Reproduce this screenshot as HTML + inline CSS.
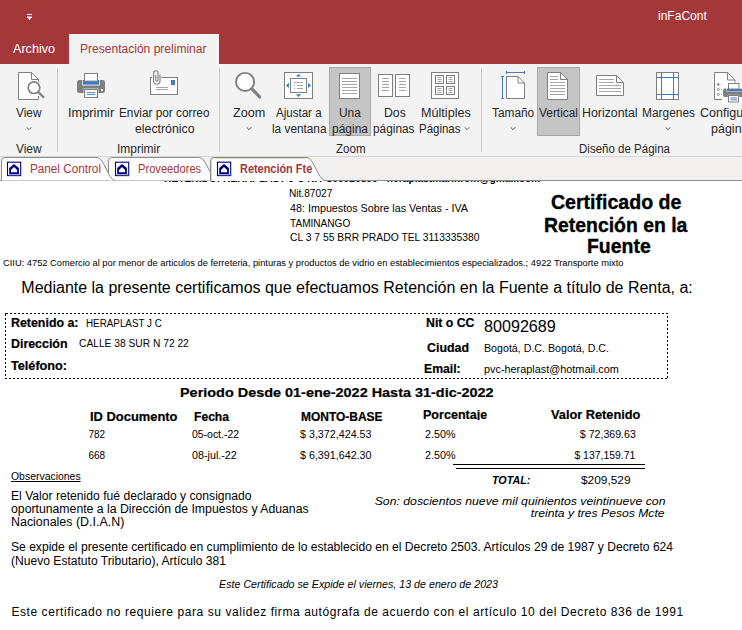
<!DOCTYPE html><html><head><meta charset="utf-8"><style>html,body{margin:0;padding:0;width:742px;height:630px;overflow:hidden;background:#fff;position:relative}.t{position:absolute;white-space:nowrap;line-height:normal;font-family:"Liberation Sans",sans-serif}</style></head><body><div style="position:absolute;left:0;top:0;width:742px;height:64px;background:#A4373A"></div>
<!-- QAT icon -->
<div style="position:absolute;left:27px;top:14px;width:5px;height:1px;background:#fff"></div>
<svg style="position:absolute;left:26px;top:16px" width="7" height="5"><path d="M1 1H6L3.5 4Z" fill="#fff"/><rect x="1" y="0.5" width="5" height="1" fill="#fff"/></svg>
<!-- active ribbon tab -->
<div style="position:absolute;left:69px;top:34px;width:150px;height:30px;background:#F3F3F3"></div>
<!-- ribbon body -->
<div style="position:absolute;left:0;top:64px;width:742px;height:92px;background:#F3F3F3"></div>
<div style="position:absolute;left:0;top:156px;width:742px;height:1px;background:#D6D6D6"></div>
<!-- separators -->
<div style="position:absolute;left:57px;top:68px;width:1px;height:84px;background:#C8C8C8"></div>
<div style="position:absolute;left:219px;top:68px;width:1px;height:84px;background:#C8C8C8"></div>
<div style="position:absolute;left:481px;top:68px;width:1px;height:84px;background:#C8C8C8"></div>
<!-- selected buttons -->
<div style="position:absolute;left:329px;top:67px;width:40px;height:67px;background:#C5C5C5;border:1px solid #A8A8A8"></div>
<div style="position:absolute;left:537px;top:67px;width:41px;height:67px;background:#C5C5C5;border:1px solid #A8A8A8"></div>
<!-- chevrons -->
<svg style="position:absolute;left:0;top:0" width="742" height="160">
  <g fill="none" stroke="#555" stroke-width="1">
    <path d="M26.7 127.3 L29 129.6 L31.3 127.3"/>
    <path d="M246.7 127.3 L249 129.6 L251.3 127.3"/>
    <path d="M464.7 127.3 L467 129.6 L469.3 127.3"/>
    <path d="M510.7 127.3 L513 129.6 L515.3 127.3"/>
    <path d="M665.7 127.3 L668 129.6 L670.3 127.3"/>
  </g>
  <!-- View icon: page with magnifier -->
  <path d="M18.5 72.5 H31.5 L38.5 79.5 V99.5 H18.5 Z" fill="#fff" stroke="#7F7F7F"/>
  <path d="M31.5 72.5 V79.5 H38.5" fill="none" stroke="#7F7F7F"/>
  <path d="M38.3 92 L44 97.7" stroke="#F3F3F3" stroke-width="4.5"/>
  <circle cx="34" cy="87.7" r="7.4" fill="#fff"/>
  <rect x="37" y="93" width="3" height="3" fill="#F3F3F3"/>
  <circle cx="34" cy="87.7" r="5.8" fill="#fff" stroke="#7F7F7F" stroke-width="1.7"/>
  <path d="M38.3 92 L44 97.7" stroke="#7F7F7F" stroke-width="2.3"/>
  <!-- printer -->
  <rect x="77" y="80" width="28" height="13" rx="2.2" fill="#7F7F7F"/>
  <rect x="82.3" y="79.3" width="17.4" height="6.2" fill="#fff"/>
  <rect x="83" y="80" width="16" height="4.7" fill="#3E7BC0"/>
  <rect x="84.5" y="73.5" width="13" height="7.6" fill="#fff" stroke="#7F7F7F"/>
  <rect x="83.6" y="88.6" width="14.8" height="9.8" fill="#fff"/>
  <rect x="84.5" y="89.5" width="13" height="8" fill="#fff" stroke="#7F7F7F"/>
  <path d="M87 92.6 H95 M87 94.5 H95" stroke="#3E7BC0" stroke-width="0.9"/>
  <rect x="101" y="89" width="2" height="2" fill="#fff"/>
  <!-- envelope -->
  <rect x="150.5" y="77.5" width="27" height="17" fill="#fff" stroke="#7F7F7F"/>
  <rect x="171" y="80" width="4" height="5" fill="#3E7BC0"/>
  <path d="M156 87.5 H168 M156 89.5 H168" stroke="#A6A6A6"/>
  <path d="M160 74.5 V81 A3.2 3.2 0 0 1 153.6 81 V73 A2.2 2.2 0 0 1 158 73 V80 A1.1 1.1 0 0 1 155.8 80 V75" fill="none" stroke="#F3F3F3" stroke-width="2.6"/>
  <rect x="152" y="78" width="9.5" height="8" fill="#fff"/>
  <path d="M160 74.5 V81 A3.2 3.2 0 0 1 153.6 81 V73 A2.2 2.2 0 0 1 158 73 V80 A1.1 1.1 0 0 1 155.8 80 V75" fill="none" stroke="#7F7F7F" stroke-width="1.1"/>
  <!-- zoom magnifier -->
  <circle cx="245.1" cy="81.9" r="9.05" fill="#fff" stroke="#7F7F7F" stroke-width="1.9"/>
  <path d="M251.8 88.8 L259.6 96.8" stroke="#7F7F7F" stroke-width="3.2" stroke-linecap="round"/>
  <!-- ajustar -->
  <rect x="284.5" y="72.5" width="28" height="26" fill="#fff" stroke="#7F7F7F"/>
  <rect x="290.5" y="78.5" width="16" height="14" fill="#fff" stroke="#7F7F7F"/>
  <path d="M294 82.5 H303 M297 85.5 H303 M297 88.5 H303" stroke="#A6A6A6"/>
  <rect x="294" y="85" width="1" height="1" fill="#A6A6A6"/><rect x="294" y="88" width="1" height="1" fill="#A6A6A6"/>
  <path d="M295.8 76.6 L298.5 73.9 L301.2 76.6 Z M295.8 94.2 L298.5 96.9 L301.2 94.2 Z M288.9 82.8 L286 85.4 L288.9 88 Z M308 82.8 L311 85.4 L308 88 Z" fill="#3E7BC0"/>
  <!-- una pagina -->
  <rect x="339.5" y="73.5" width="20" height="25" fill="#fff" stroke="#7F7F7F"/>
  <path d="M342 78.5 H357 M342 81.5 H357 M342 84.5 H357 M342 87.5 H357 M342 90.5 H357 M342 93.5 H357" stroke="#A6A6A6"/>
  <!-- dos paginas -->
  <rect x="378.5" y="74.5" width="14" height="22" fill="#fff" stroke="#7F7F7F"/>
  <rect x="395.5" y="74.5" width="14" height="22" fill="#fff" stroke="#7F7F7F"/>
  <path d="M382 78.5 H389 M382 81.5 H389 M382 84.5 H389 M382 87.5 H389 M382 90.5 H389 M399 78.5 H406 M399 81.5 H406 M399 84.5 H406 M399 87.5 H406 M399 90.5 H406" stroke="#A6A6A6"/>
  <!-- multiples -->
  <rect x="431.5" y="72.5" width="27" height="26" fill="#fff" stroke="#7F7F7F"/>
  <rect x="435.5" y="75.5" width="8" height="8" fill="#fff" stroke="#7F7F7F"/>
  <rect x="446.5" y="75.5" width="8" height="8" fill="#fff" stroke="#7F7F7F"/>
  <rect x="435.5" y="86.5" width="8" height="8" fill="#fff" stroke="#7F7F7F"/>
  <rect x="446.5" y="86.5" width="8" height="8" fill="#fff" stroke="#7F7F7F"/>
  <path d="M437.5 77.5 H441.5 M437.5 79.5 H441.5 M437.5 81.5 H441.5 M448.5 77.5 H452.5 M448.5 79.5 H452.5 M448.5 81.5 H452.5 M437.5 88.5 H441.5 M437.5 90.5 H441.5 M437.5 92.5 H441.5 M448.5 88.5 H452.5 M448.5 90.5 H452.5 M448.5 92.5 H452.5" stroke="#A6A6A6"/>
  <!-- tamano -->
  <path d="M506.5 76.5 H518 L524.5 83 V98.5 H506.5 Z" fill="#fff" stroke="#7F7F7F"/>
  <path d="M518 76.5 V83 H524.5" fill="none" stroke="#7F7F7F"/>
  <path d="M506 72.5 H525 M506.5 71 V74 M524.5 71 V74 M502.5 76 V99 M501 76.5 H504 M501 98.5 H504" stroke="#3E7BC0"/>
  <!-- vertical -->
  <path d="M547.5 72.5 H560.5 L567.5 79.5 V99.5 H547.5 Z" fill="#fff" stroke="#7F7F7F"/>
  <path d="M560.5 72.5 V79.5 H567.5" fill="none" stroke="#7F7F7F"/>
  <path d="M550 76.5 H558 M550 79.5 H558 M550 82.5 H565 M550 85.5 H565 M550 88.5 H565 M550 91.5 H565 M550 94.5 H565" stroke="#A6A6A6"/>
  <!-- horizontal -->
  <path d="M596.5 75.5 H616.5 L623.5 82.5 V95.5 H596.5 Z" fill="#fff" stroke="#7F7F7F"/>
  <path d="M616.5 75.5 V82.5 H623.5" fill="none" stroke="#7F7F7F"/>
  <path d="M599 79.5 H614 M599 82.5 H614 M599 85.5 H621 M599 88.5 H621 M599 91.5 H621" stroke="#A6A6A6"/>
  <!-- margenes -->
  <rect x="656.5" y="72.5" width="22" height="27" fill="#fff" stroke="#7F7F7F"/>
  <path d="M661.5 73 V99 M673.5 73 V99 M657 77.5 H678 M657 94.5 H678" stroke="#3E7BC0"/>
  <!-- config -->
  <path d="M714.5 72.5 H727.5 L735 80 V99.5 H714.5 Z" fill="#fff" stroke="#7F7F7F"/>
  <path d="M727.5 72.5 V80 H735" fill="none" stroke="#7F7F7F"/>
  <circle cx="718.3" cy="84.4" r="1.2" fill="#7F7F7F"/>
  <circle cx="718.3" cy="89.4" r="1.1" fill="none" stroke="#7F7F7F" stroke-width="0.8"/>
  <circle cx="718.3" cy="94.4" r="1.1" fill="none" stroke="#7F7F7F" stroke-width="0.8"/>
  <path d="M721 84.5 H727 M721 89.5 H722 M721 94.5 H722" stroke="#A6A6A6"/>
  <rect x="722" y="82.5" width="22" height="21" fill="#fff"/>
  <rect x="723" y="88.5" width="22" height="8.5" rx="2" fill="#7F7F7F"/>
  <rect x="726.5" y="88.5" width="16" height="3" fill="#fff"/>
  <rect x="727" y="89" width="15" height="2.2" fill="#3E7BC0"/>
  <rect x="728.5" y="83.5" width="10.5" height="5.5" fill="#fff" stroke="#7F7F7F"/>
  <rect x="727.8" y="94.8" width="11.4" height="7.8" fill="#fff"/>
  <rect x="728.5" y="95.5" width="10" height="6.5" fill="#fff" stroke="#7F7F7F"/>
  <path d="M730.5 98 H737 M730.5 99.8 H737" stroke="#3E7BC0" stroke-width="0.9"/>
</svg>
<!-- tab bar -->
<div style="position:absolute;left:0;top:157px;width:742px;height:24px;background:#F1F0EF;z-index:3"></div>
<svg style="position:absolute;left:0;top:150px;z-index:4" width="742" height="31">
  <defs>
    <g id="ic">
      <rect x="7.5" y="12.2" width="13.2" height="13.4" fill="#fff" stroke="#000080" stroke-width="1.1"/>
      <path d="M8.5 24.8 H20.5" stroke="#8080C0" stroke-width="1"/>
      <path d="M9.2 24 V18.1 L14 14.1 L18.9 18.1 V24 Z M11 22.2 V19.9 L14 16.9 L17.1 19.9 V22.2 Z" fill="#000080" fill-rule="evenodd"/>
    </g>
  </defs>
  <path d="M0 30.5 H742" stroke="#8C8C8C"/>
  <path d="M108.5 30.5 V11 Q108.5 7.5 112 7.5 H199.7 C205.7 7.5 211.7 30.5 217.7 30.5" fill="#fff" stroke="#8C8C8C"/>
  <path d="M1.5 30.5 V11 Q1.5 7.5 5 7.5 H97.4 C103.4 7.5 109 30.5 115 30.5" fill="#fff" stroke="#8C8C8C"/>
  <path d="M210.5 31 V11 Q210.5 7.5 214 7.5 H307 C313 7.5 319 30.5 325 30.5 H742" fill="#fff" stroke="#8C8C8C"/>
  <path d="M211.5 31 V11.5 Q211.5 8.5 214.5 8.5 H306.5" fill="none" stroke="#E3D2B4"/>
  <use href="#ic"/>
  <use href="#ic" x="108"/>
  <use href="#ic" x="210"/>
</svg>
<!-- document -->
<div style="position:absolute;left:0;top:181px;width:742px;height:449px;background:#fff;z-index:0"></div>
<svg style="position:absolute;left:0;top:300px;z-index:1" width="742" height="200">
  <rect x="5.5" y="13.5" width="662" height="65" fill="none" stroke="#000" stroke-dasharray="2,2" shape-rendering="crispEdges"/>
  <path d="M453 164.5 H645 M456 168.5 H645" stroke="#000"/>
</svg>

<div class="t" id="t0" style="font-size:12.5px;font-weight:400;font-style:normal;color:#fff;z-index:1;top:41.69px;left:12.80px;transform-origin:left top;transform:scaleX(1.0075);">Archivo</div>
<div class="t" id="t1" style="font-size:12.5px;font-weight:400;font-style:normal;color:#A4373A;z-index:1;top:41.69px;left:80.30px;transform-origin:left top;transform:scaleX(0.9634);">Presentación preliminar</div>
<div class="t" id="t2" style="font-size:12px;font-weight:400;font-style:normal;color:#fff;z-index:1;top:9.14px;left:657.60px;transform-origin:left top;transform:scaleX(1.0020);">inFaCont</div>
<div class="t" id="t3" style="font-size:12.5px;font-weight:400;font-style:normal;color:#262626;z-index:1;top:105.69px;left:16.00px;transform-origin:left top;transform:scaleX(0.9488);">View</div>
<div class="t" id="t4" style="font-size:12.5px;font-weight:400;font-style:normal;color:#262626;z-index:1;top:141.69px;left:16.00px;transform-origin:left top;transform:scaleX(0.9488);">View</div>
<div class="t" id="t5" style="font-size:12.5px;font-weight:400;font-style:normal;color:#262626;z-index:1;top:105.99px;left:67.80px;transform-origin:left top;transform:scaleX(1.0235);">Imprimir</div>
<div class="t" id="t6" style="font-size:12.5px;font-weight:400;font-style:normal;color:#262626;z-index:1;top:105.99px;left:118.80px;transform-origin:left top;transform:scaleX(0.9439);">Enviar por correo</div>
<div class="t" id="t7" style="font-size:12.5px;font-weight:400;font-style:normal;color:#262626;z-index:1;top:122.19px;left:134.60px;transform-origin:left top;transform:scaleX(0.9842);">electrónico</div>
<div class="t" id="t8" style="font-size:12.5px;font-weight:400;font-style:normal;color:#262626;z-index:1;top:141.69px;left:116.80px;transform-origin:left top;transform:scaleX(0.9570);">Imprimir</div>
<div class="t" id="t9" style="font-size:12.5px;font-weight:400;font-style:normal;color:#262626;z-index:1;top:105.69px;left:233.00px;transform-origin:left top;transform:scaleX(1.0109);">Zoom</div>
<div class="t" id="t10" style="font-size:12.5px;font-weight:400;font-style:normal;color:#262626;z-index:1;top:105.69px;left:276.00px;transform-origin:left top;transform:scaleX(0.9241);">Ajustar a</div>
<div class="t" id="t11" style="font-size:12.5px;font-weight:400;font-style:normal;color:#262626;z-index:1;top:122.19px;left:272.40px;transform-origin:left top;transform:scaleX(0.9447);">la ventana</div>
<div class="t" id="t12" style="font-size:12.5px;font-weight:400;font-style:normal;color:#262626;z-index:1;top:105.69px;left:339.00px;transform-origin:left top;transform:scaleX(0.9504);">Una</div>
<div class="t" id="t13" style="font-size:12.5px;font-weight:400;font-style:normal;color:#262626;z-index:1;top:122.19px;left:331.80px;transform-origin:left top;transform:scaleX(0.9588);">página</div>
<div class="t" id="t14" style="font-size:12.5px;font-weight:400;font-style:normal;color:#262626;z-index:1;top:105.69px;left:383.50px;transform-origin:left top;transform:scaleX(0.9805);">Dos</div>
<div class="t" id="t15" style="font-size:12.5px;font-weight:400;font-style:normal;color:#262626;z-index:1;top:122.19px;left:372.60px;transform-origin:left top;transform:scaleX(0.9476);">páginas</div>
<div class="t" id="t16" style="font-size:12.5px;font-weight:400;font-style:normal;color:#262626;z-index:1;top:105.69px;left:420.80px;transform-origin:left top;transform:scaleX(1.0096);">Múltiples</div>
<div class="t" id="t17" style="font-size:12.5px;font-weight:400;font-style:normal;color:#262626;z-index:1;top:122.19px;left:418.80px;transform-origin:left top;transform:scaleX(0.9184);">Páginas</div>
<div class="t" id="t18" style="font-size:12.5px;font-weight:400;font-style:normal;color:#262626;z-index:1;top:141.69px;left:335.50px;transform-origin:left top;transform:scaleX(0.9232);">Zoom</div>
<div class="t" id="t19" style="font-size:12.5px;font-weight:400;font-style:normal;color:#262626;z-index:1;top:105.69px;left:492.30px;transform-origin:left top;transform:scaleX(0.9486);">Tamaño</div>
<div class="t" id="t20" style="font-size:12.5px;font-weight:400;font-style:normal;color:#262626;z-index:1;top:105.69px;left:538.70px;transform-origin:left top;transform:scaleX(0.9512);">Vertical</div>
<div class="t" id="t21" style="font-size:12.5px;font-weight:400;font-style:normal;color:#262626;z-index:1;top:105.69px;left:581.80px;transform-origin:left top;transform:scaleX(0.9879);">Horizontal</div>
<div class="t" id="t22" style="font-size:12.5px;font-weight:400;font-style:normal;color:#262626;z-index:1;top:105.69px;left:641.50px;transform-origin:left top;transform:scaleX(0.9533);">Margenes</div>
<div class="t" id="t23" style="font-size:12.5px;font-weight:400;font-style:normal;color:#262626;z-index:1;top:105.69px;left:700.00px;transform-origin:left top;">Configurar</div>
<div class="t" id="t24" style="font-size:12.5px;font-weight:400;font-style:normal;color:#262626;z-index:1;top:122.19px;left:711.00px;transform-origin:left top;">página</div>
<div class="t" id="t25" style="font-size:12.5px;font-weight:400;font-style:normal;color:#262626;z-index:1;top:141.69px;left:578.80px;transform-origin:left top;transform:scaleX(0.9221);">Diseño de Página</div>
<div class="t" id="t26" style="font-size:12px;font-weight:400;font-style:normal;color:#A4373A;z-index:5;top:162.14px;left:29.60px;transform-origin:left top;transform:scaleX(0.9764);">Panel Control</div>
<div class="t" id="t27" style="font-size:12px;font-weight:400;font-style:normal;color:#A4373A;z-index:5;top:162.14px;left:137.80px;transform-origin:left top;transform:scaleX(0.9288);">Proveedores</div>
<div class="t" id="t28" style="font-size:12px;font-weight:700;font-style:normal;color:#A4373A;z-index:5;top:162.14px;left:239.60px;transform-origin:left top;transform:scaleX(0.9100);">Retención Fte</div>
<div class="t" id="t29" style="font-size:11px;font-weight:700;font-style:normal;color:#000;z-index:0;top:171.84px;left:164.00px;transform-origin:left top;transform:scaleX(0.9298);">RETENIDO: HERAPLAST J C  NIT 800926890 - heraplastmarinrom@gmail.com</div>
<div class="t" id="t30" style="font-size:10.5px;font-weight:400;font-style:normal;color:#000;z-index:1;top:186.80px;left:288.80px;transform-origin:left top;transform:scaleX(0.9632);">Nit.87027</div>
<div class="t" id="t31" style="font-size:10.5px;font-weight:400;font-style:normal;color:#000;z-index:1;top:202.20px;left:289.70px;transform-origin:left top;transform:scaleX(1.0246);">48: Impuestos Sobre las Ventas - IVA</div>
<div class="t" id="t32" style="font-size:10.5px;font-weight:400;font-style:normal;color:#000;z-index:1;top:217.20px;left:289.70px;transform-origin:left top;transform:scaleX(0.9600);">TAMINANGO</div>
<div class="t" id="t33" style="font-size:10.5px;font-weight:400;font-style:normal;color:#000;z-index:1;top:231.10px;left:289.70px;transform-origin:left top;transform:scaleX(0.9838);">CL 3 7 55 BRR PRADO TEL 3113335380</div>
<div class="t" id="t34" style="font-size:19.5px;font-weight:700;font-style:normal;color:#000;z-index:1;top:190.75px;left:551.20px;transform-origin:left top;transform:scaleX(1.0028);-webkit-text-stroke:0.35px #000;">Certificado de</div>
<div class="t" id="t35" style="font-size:19.5px;font-weight:700;font-style:normal;color:#000;z-index:1;top:213.75px;left:543.60px;transform-origin:left top;transform:scaleX(0.9950);-webkit-text-stroke:0.35px #000;">Retención en la</div>
<div class="t" id="t36" style="font-size:19.5px;font-weight:700;font-style:normal;color:#000;z-index:1;top:235.35px;left:586.70px;transform-origin:left top;transform:scaleX(0.9965);-webkit-text-stroke:0.35px #000;">Fuente</div>
<div class="t" id="t37" style="font-size:8.5px;font-weight:400;font-style:normal;color:#000;z-index:1;top:257.71px;left:3.00px;transform-origin:left top;transform:scaleX(1.0952);">CIIU: 4752 Comercio al por menor de articulos de ferreteria, pinturas y productos de vidrio en establecimientos especializados.; 4922 Transporte mixto</div>
<div class="t" id="t38" style="font-size:16px;font-weight:400;font-style:normal;color:#000;z-index:1;top:279.12px;left:21.30px;transform-origin:left top;">Mediante la presente certificamos que efectuamos Retención en la Fuente a título de Renta, a:</div>
<div class="t" id="t39" style="font-size:12px;font-weight:700;font-style:normal;color:#000;z-index:1;top:316.14px;left:11.00px;transform-origin:left top;transform:scaleX(1.0330);-webkit-text-stroke:0.2px #000;">Retenido a:</div>
<div class="t" id="t40" style="font-size:10px;font-weight:400;font-style:normal;color:#000;z-index:1;top:318.45px;left:85.70px;transform-origin:left top;transform:scaleX(0.9836);">HERAPLAST J C</div>
<div class="t" id="t41" style="font-size:12px;font-weight:700;font-style:normal;color:#000;z-index:1;top:337.14px;left:11.00px;transform-origin:left top;transform:scaleX(1.0331);-webkit-text-stroke:0.2px #000;">Dirección</div>
<div class="t" id="t42" style="font-size:10px;font-weight:400;font-style:normal;color:#000;z-index:1;top:338.35px;left:79.20px;transform-origin:left top;transform:scaleX(1.0235);">CALLE 38 SUR N 72 22</div>
<div class="t" id="t43" style="font-size:12px;font-weight:700;font-style:normal;color:#000;z-index:1;top:359.14px;left:11.40px;transform-origin:left top;transform:scaleX(1.0544);-webkit-text-stroke:0.2px #000;">Teléfono:</div>
<div class="t" id="t44" style="font-size:12px;font-weight:700;font-style:normal;color:#000;z-index:1;top:315.84px;left:425.50px;transform-origin:left top;transform:scaleX(1.0248);-webkit-text-stroke:0.2px #000;">Nit o CC</div>
<div class="t" id="t45" style="font-size:15.8px;font-weight:400;font-style:normal;color:#000;z-index:1;top:317.70px;left:483.50px;transform-origin:left top;transform:scaleX(1.0214);">80092689</div>
<div class="t" id="t46" style="font-size:12px;font-weight:700;font-style:normal;color:#000;z-index:1;top:341.14px;left:427.00px;transform-origin:left top;transform:scaleX(1.0327);-webkit-text-stroke:0.2px #000;">Ciudad</div>
<div class="t" id="t47" style="font-size:10px;font-weight:400;font-style:normal;color:#000;z-index:1;top:342.95px;left:483.50px;transform-origin:left top;transform:scaleX(1.0658);">Bogotá, D.C. Bogotá, D.C.</div>
<div class="t" id="t48" style="font-size:12px;font-weight:700;font-style:normal;color:#000;z-index:1;top:362.14px;left:423.80px;transform-origin:left top;transform:scaleX(1.0190);-webkit-text-stroke:0.2px #000;">Email:</div>
<div class="t" id="t49" style="font-size:10px;font-weight:400;font-style:normal;color:#000;z-index:1;top:363.95px;left:483.50px;transform-origin:left top;transform:scaleX(1.0863);">pvc-heraplast@hotmail.com</div>
<div class="t" id="t50" style="font-size:12.5px;font-weight:700;font-style:normal;color:#000;z-index:1;top:385.89px;left:180.00px;transform-origin:left top;transform:scaleX(1.1543);-webkit-text-stroke:0.2px #000;">Periodo Desde 01-ene-2022 Hasta 31-dic-2022</div>
<div class="t" id="t51" style="font-size:12px;font-weight:700;font-style:normal;color:#000;z-index:1;top:410.14px;left:89.50px;transform-origin:left top;transform:scaleX(1.0757);-webkit-text-stroke:0.2px #000;">ID Documento</div>
<div class="t" id="t52" style="font-size:12px;font-weight:700;font-style:normal;color:#000;z-index:1;top:410.14px;left:194.00px;transform-origin:left top;transform:scaleX(1.0090);-webkit-text-stroke:0.2px #000;">Fecha</div>
<div class="t" id="t53" style="font-size:12px;font-weight:700;font-style:normal;color:#000;z-index:1;top:410.14px;left:301.00px;transform-origin:left top;transform:scaleX(0.9966);-webkit-text-stroke:0.2px #000;">MONTO-BASE</div>
<div class="t" id="t54" style="font-size:12px;font-weight:700;font-style:normal;color:#000;z-index:1;top:408.14px;left:422.60px;transform-origin:left top;transform:scaleX(1.0463);-webkit-text-stroke:0.2px #000;height:12px;overflow:hidden;">Porcentaje</div>
<div class="t" id="t55" style="font-size:12px;font-weight:700;font-style:normal;color:#000;z-index:1;top:408.14px;left:551.00px;transform-origin:left top;transform:scaleX(1.0639);-webkit-text-stroke:0.2px #000;">Valor Retenido</div>
<div class="t" id="t56" style="font-size:10px;font-weight:400;font-style:normal;color:#000;z-index:1;top:428.95px;left:88.50px;transform-origin:left top;">782</div>
<div class="t" id="t57" style="font-size:10px;font-weight:400;font-style:normal;color:#000;z-index:1;top:428.95px;left:191.50px;transform-origin:left top;transform:scaleX(1.0437);">05-oct.-22</div>
<div class="t" id="t58" style="font-size:10px;font-weight:400;font-style:normal;color:#000;z-index:1;top:428.95px;left:300.00px;transform-origin:left top;transform:scaleX(1.0714);">$ 3,372,424.53</div>
<div class="t" id="t59" style="font-size:10px;font-weight:400;font-style:normal;color:#000;z-index:1;top:428.95px;left:424.80px;transform-origin:left top;transform:scaleX(1.0755);">2.50%</div>
<div class="t" id="t60" style="font-size:10px;font-weight:400;font-style:normal;color:#000;z-index:1;top:428.95px;right:106.00px;transform-origin:right top;transform:scaleX(1.0600);">$ 72,369.63</div>
<div class="t" id="t61" style="font-size:10px;font-weight:400;font-style:normal;color:#000;z-index:1;top:449.55px;left:88.50px;transform-origin:left top;">668</div>
<div class="t" id="t62" style="font-size:10px;font-weight:400;font-style:normal;color:#000;z-index:1;top:449.55px;left:191.50px;transform-origin:left top;transform:scaleX(1.0743);">08-jul.-22</div>
<div class="t" id="t63" style="font-size:10px;font-weight:400;font-style:normal;color:#000;z-index:1;top:449.55px;left:300.00px;transform-origin:left top;transform:scaleX(1.0714);">$ 6,391,642.30</div>
<div class="t" id="t64" style="font-size:10px;font-weight:400;font-style:normal;color:#000;z-index:1;top:449.55px;left:424.80px;transform-origin:left top;transform:scaleX(1.0755);">2.50%</div>
<div class="t" id="t65" style="font-size:10px;font-weight:400;font-style:normal;color:#000;z-index:1;top:449.55px;right:106.50px;transform-origin:right top;transform:scaleX(1.0447);">$ 137,159.71</div>
<div class="t" id="t66" style="font-size:11px;font-weight:700;font-style:italic;color:#000;z-index:1;top:473.85px;left:491.70px;transform-origin:left top;transform:scaleX(0.9742);">TOTAL:</div>
<div class="t" id="t67" style="font-size:11.5px;font-weight:400;font-style:normal;color:#000;z-index:1;top:474.09px;left:580.60px;transform-origin:left top;transform:scaleX(1.0340);">$209,529</div>
<div class="t" id="t68" style="font-size:10px;font-weight:400;font-style:normal;color:#000;z-index:1;top:471.25px;left:11.40px;transform-origin:left top;transform:scaleX(1.0434);text-decoration:underline;">Observaciones</div>
<div class="t" id="t69" style="font-size:12px;font-weight:400;font-style:normal;color:#000;z-index:1;top:488.64px;left:11.40px;transform-origin:left top;transform:scaleX(1.0112);">El Valor retenido fué declarado y consignado</div>
<div class="t" id="t70" style="font-size:12px;font-weight:400;font-style:normal;color:#000;z-index:1;top:502.04px;left:11.40px;transform-origin:left top;transform:scaleX(1.0209);">oportunamente a la Dirección de Impuestos y Aduanas</div>
<div class="t" id="t71" style="font-size:12px;font-weight:400;font-style:normal;color:#000;z-index:1;top:515.44px;left:11.40px;transform-origin:left top;transform:scaleX(1.0359);">Nacionales (D.I.A.N)</div>
<div class="t" id="t72" style="font-size:10.6px;font-weight:400;font-style:italic;color:#000;z-index:1;top:495.21px;right:77.00px;transform-origin:right top;transform:scaleX(1.1564);">Son: doscientos nueve mil quinientos veintinueve con</div>
<div class="t" id="t73" style="font-size:10.6px;font-weight:400;font-style:italic;color:#000;z-index:1;top:507.01px;right:77.00px;transform-origin:right top;transform:scaleX(1.1477);">treinta y tres Pesos Mcte</div>
<div class="t" id="t74" style="font-size:12px;font-weight:400;font-style:normal;color:#000;z-index:1;top:539.84px;left:11.40px;transform-origin:left top;transform:scaleX(1.0076);">Se expide el presente certificado en cumplimiento de lo establecido en el Decreto 2503. Artículos 29 de 1987 y Decreto 624</div>
<div class="t" id="t75" style="font-size:12px;font-weight:400;font-style:normal;color:#000;z-index:1;top:553.84px;left:11.40px;transform-origin:left top;transform:scaleX(1.0072);">(Nuevo Estatuto Tributario), Artículo 381</div>
<div class="t" id="t76" style="font-size:10px;font-weight:400;font-style:italic;color:#000;z-index:1;top:579.15px;left:218.90px;transform-origin:left top;transform:scaleX(1.0701);">Este Certificado se Expide el viernes, 13 de enero de 2023</div>
<div class="t" id="t77" style="font-size:12px;font-weight:400;font-style:normal;color:#000;z-index:1;top:604.54px;left:11.40px;transform-origin:left top;letter-spacing:0.574px;">Este certificado no requiere para su validez firma autógrafa de acuerdo con el artículo 10 del Decreto 836 de 1991</div>
</body></html>
